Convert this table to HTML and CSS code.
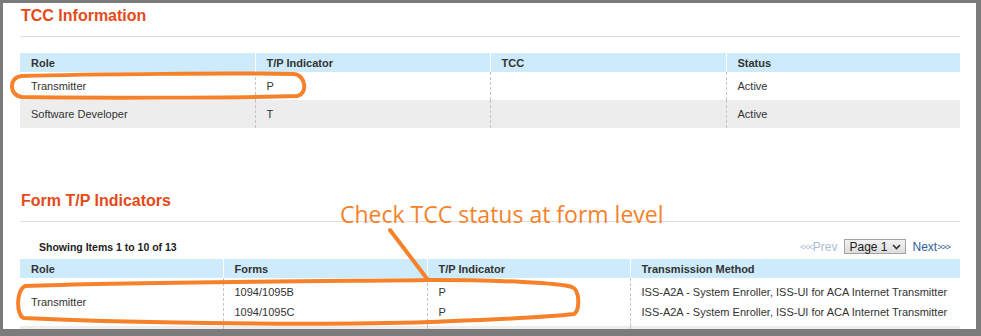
FILE: index.html
```html
<!DOCTYPE html>
<html lang="en">
<head>
<meta charset="utf-8">
<title>TCC Information</title>
<link rel="stylesheet" href="styles.css">
</head>
<body>
<div class="page">
  <section class="panel">
    <h2 class="section-title">TCC Information</h2>
    <table class="grid grid-tcc">
      <colgroup>
        <col class="c-role"><col class="c-ind"><col class="c-tcc"><col class="c-status">
      </colgroup>
      <thead>
        <tr><th>Role</th><th>T/P Indicator</th><th>TCC</th><th>Status</th></tr>
      </thead>
      <tbody>
        <tr><td>Transmitter</td><td>P</td><td></td><td>Active</td></tr>
        <tr class="alt"><td>Software Developer</td><td>T</td><td></td><td>Active</td></tr>
      </tbody>
    </table>
  </section>

  <section class="panel panel-forms">
    <h2 class="section-title">Form T/P Indicators</h2>
    <div class="toolbar">
      <span class="count">Showing Items 1 to 10 of 13</span>
      <div class="pager">
        <span class="pager-link disabled"><span class="arrows">&lt;&lt;&lt;</span>Prev</span>
        <span class="page-select">Page 1
          <svg class="chev" width="9" height="6" viewBox="0 0 9 6"><path d="M1 1 L4.5 4.5 L8 1" fill="none" stroke="#333" stroke-width="1.6"/></svg>
        </span>
        <span class="pager-link">Next<span class="arrows">&gt;&gt;&gt;</span></span>
      </div>
    </div>
    <table class="grid grid-forms">
      <colgroup>
        <col class="f-role"><col class="f-forms"><col class="f-ind"><col class="f-method">
      </colgroup>
      <thead>
        <tr><th>Role</th><th>Forms</th><th>T/P Indicator</th><th>Transmission Method</th></tr>
      </thead>
      <tbody>
        <tr class="multi">
          <td>Transmitter</td>
          <td><div class="stack"><span>1094/1095B</span><span>1094/1095C</span></div></td>
          <td><div class="stack"><span>P</span><span>P</span></div></td>
          <td><div class="stack"><span>ISS-A2A - System Enroller, ISS-UI for ACA Internet Transmitter</span><span>ISS-A2A - System Enroller, ISS-UI for ACA Internet Transmitter</span></div></td>
        </tr>
        <tr class="alt"><td></td><td></td><td></td><td></td></tr>
      </tbody>
    </table>
  </section>
</div>

<svg class="markup" width="981" height="336" viewBox="0 0 981 336">
  <g fill="none" stroke="#f5822b" stroke-width="4" stroke-linecap="round" stroke-linejoin="round">
    <path d="M22 76 C90 74 240 73 294 74 C306 75 308 94 297 96 C230 98 90 98 22 97 C9 96 8 77 22 76 Z"/>
    <path d="M25 286 C120 282 350 281 430 280 C500 280 560 283 572 287 C580 290 580 310 574 314 C540 318 480 320 430 322 C300 326 100 322 24 318 C16 316 16 290 25 286 Z"/>
    <path d="M390 230 L428 280"/>
  </g>
  <text class="note" x="340" y="223">Check TCC status at form level</text>
</svg>
</body>
</html>
```

FILE: styles.css
```css
html, body {
  margin: 0;
  padding: 0;
}

body {
  width: 981px;
  height: 336px;
  background: #7b7b7b;
  position: relative;
  overflow: hidden;
  font-family: "Liberation Sans", Arial, sans-serif;
  font-size: 11px;
  color: #333;
}

.page {
  margin: 3px 0 0 3px;
  width: 973px;
  height: 326px;
  background: #fff;
  box-sizing: border-box;
  padding: 0 16px 0 17px;
  overflow: hidden;
}

.section-title {
  margin: 0;
  padding: 3px 0 10px 1px;
  font: bold 16px/20px "Liberation Sans", Arial, sans-serif;
  color: #e64a19;
  border-bottom: 1px solid #dcdcdc;
}

.grid-tcc {
  margin-top: 16px;
}

.panel-forms {
  margin-top: 60px;
}

.grid {
  width: 100%;
  border-collapse: collapse;
  table-layout: fixed;
}

.c-role { width: 235px; }
.c-ind { width: 235px; }
.c-tcc { width: 236px; }
.c-status { width: 234px; }

.f-role { width: 203px; }
.f-forms { width: 204px; }
.f-ind { width: 203px; }
.f-method { width: 330px; }

.grid th {
  height: 19px;
  padding: 0 11px;
  background: #cdebfa;
  text-align: left;
  font-weight: bold;
  color: #333;
  white-space: nowrap;
}

.grid th + th {
  border-left: 1px solid #fff;
}

.grid td {
  height: 28px;
  padding: 0 11px;
  white-space: nowrap;
  vertical-align: middle;
}

.grid td + td {
  border-left: 1px dashed #c4c4c4;
}

.grid tr.alt td {
  background: #ededed;
}

.grid tr.multi td {
  height: auto;
  padding-top: 4px;
  padding-bottom: 4px;
}

.stack {
  display: flex;
  flex-direction: column;
}

.stack span {
  line-height: 20px;
}

.toolbar {
  height: 37px;
  display: flex;
  align-items: flex-end;
  justify-content: space-between;
  padding: 0 10px 4px 19px;
  box-sizing: border-box;
}

.count {
  font-weight: bold;
  font-size: 10.5px;
  line-height: 16px;
  color: #222;
}

.pager {
  display: flex;
  align-items: center;
  gap: 7px;
  font-size: 12px;
  line-height: 16px;
}

.pager-link {
  color: #2f5f99;
}

.pager-link.disabled {
  color: #aabdd4;
}

.arrows {
  font-size: 9px;
  letter-spacing: -1px;
  vertical-align: 1px;
}

.page-select {
  display: inline-flex;
  align-items: center;
  gap: 4px;
  height: 15px;
  box-sizing: border-box;
  padding: 0 4px;
  margin-top: -1px;
  border: 1px solid #a3a3a3;
  background: linear-gradient(#f2f2f2, #dcdcdc);
  color: #222;
  font-size: 12px;
}

.markup {
  position: absolute;
  top: 0;
  left: 0;
  pointer-events: none;
}

.note {
  font-family: "Open Sans", sans-serif;
  font-size: 23px;
  fill: #f5822b;
}
```
